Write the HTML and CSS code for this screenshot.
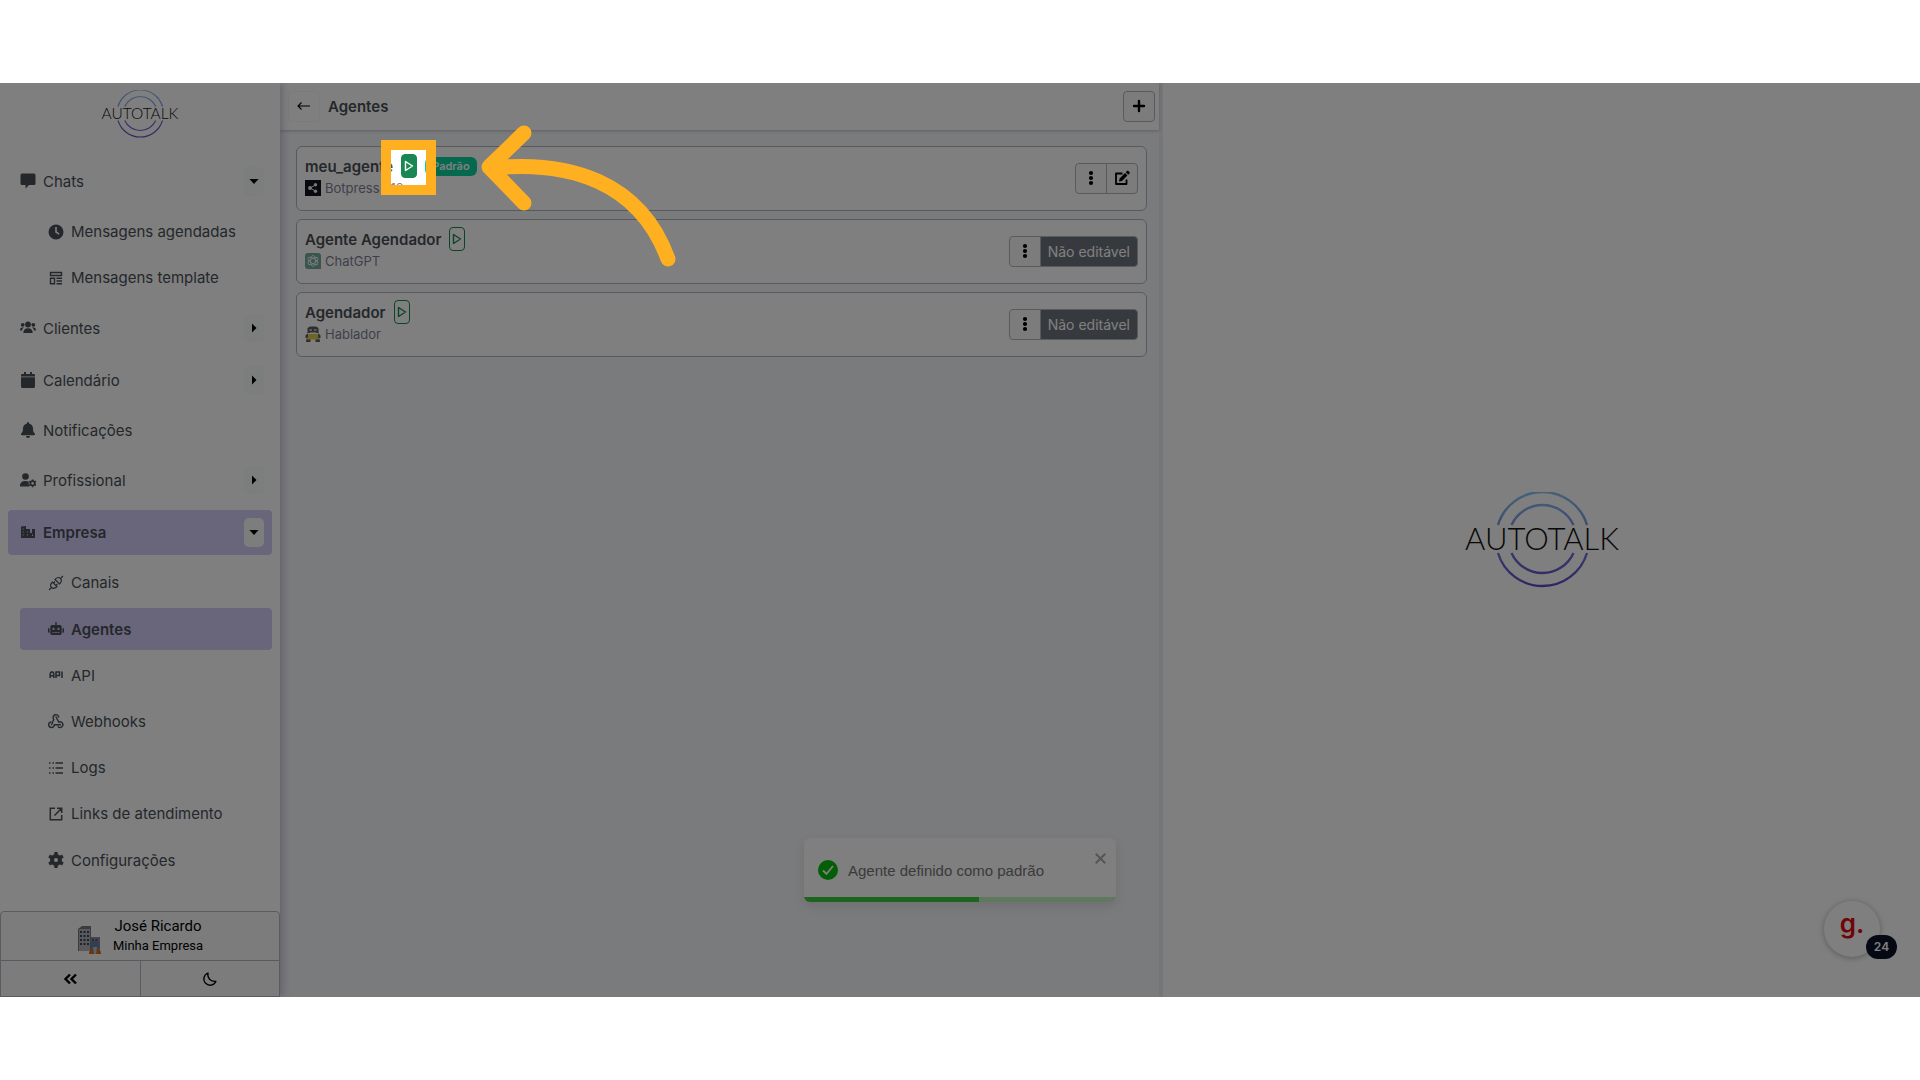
FILE: index.html
```
<!DOCTYPE html>
<html lang="pt-BR">
<head>
    <meta charset="UTF-8">
    <meta name="viewport" content="width=device-width, initial-scale=1.0">
    <title>Autotalk - Agentes</title>
    <link rel="stylesheet" href="styles.css">
</head>
<body>
    <!-- Shared icons -->
    <svg class="sprite" width="0" height="0" aria-hidden="true">
        <defs>
            <linearGradient id="ring" gradientUnits="userSpaceOnUse" x1="0" y1="0" x2="0" y2="96">
                <stop offset="0" stop-color="#8ac4f2"/>
                <stop offset="0.5" stop-color="#7583d6"/>
                <stop offset="1" stop-color="#5d48c8"/>
            </linearGradient>
        </defs>
        <symbol id="rings" viewBox="0 0 160 96">
            <g fill="none" stroke="url(#ring)" stroke-width="2.4">
                <path d="M36 33A46.500 46.500 0 0 1 125 33M49.500 33A34 34 0 0 1 111.500 33"/>
                <path d="M36 61A46.500 46.500 0 0 0 125 61M49.500 61A34 34 0 0 0 111.500 61"/>
            </g>
        </symbol>
        <symbol id="caret-down" viewBox="0 0 10 10"><path d="M.5 3h9L5 8z"/></symbol>
        <symbol id="caret-right" viewBox="0 0 10 10"><path d="M3 .5v9L7.500 5z"/></symbol>
        <symbol id="play" viewBox="0 0 10 12"><path d="M1.500 1.500v9L8.500 6z" fill="none" stroke="currentColor" stroke-width="1.400" stroke-linejoin="round"/></symbol>
        <symbol id="dots" viewBox="0 0 16 16"><circle cx="8" cy="3" r="2.100"/><circle cx="8" cy="8" r="2.100"/><circle cx="8" cy="13" r="2.100"/></symbol>
    </svg>

    <div class="stage">
        <aside class="sidebar">
            <svg class="logo logo-small" viewBox="0 0 160 96" role="img" aria-label="Autotalk">
                <use href="#rings"/>
                <text class="logo-text" x="80" y="58" text-anchor="middle">AUTOTALK</text>
            </svg>

            <nav class="menu">
                <div class="item">
                    <svg class="icon" viewBox="0 0 16 16"><path d="M2 .5h12A1.500 1.500 0 0 1 15.500 2v8.500A1.500 1.500 0 0 1 14 12H9l-3.500 3.500V12H2A1.500 1.500 0 0 1 .5 10.500V2A1.500 1.500 0 0 1 2 .5z"/></svg>
                    <a href="#">Chats</a>
                    <button class="toggle" aria-label="Recolher Chats"><svg><use href="#caret-down"/></svg></button>
                </div>
                <div class="submenu">
                    <a class="subitem" href="#">
                        <svg class="icon" viewBox="0 0 16 16"><path fill-rule="evenodd" d="M8 .5a7.500 7.500 0 1 1 0 15 7.500 7.500 0 0 1 0-15zM7.200 3v5.500l3.500 2.300.9-1.300-2.800-1.900V3z"/></svg>
                        Mensagens agendadas
                    </a>
                    <a class="subitem" href="#">
                        <svg class="icon" viewBox="0 0 16 16"><path fill="none" stroke="currentColor" stroke-width="1.400" d="M2.500 2.500h11v3h-11zM2.500 8.200h4v5.500h-4zM8.500 8.200H14M8.500 11H14M8.500 13.700H14"/></svg>
                        Mensagens template
                    </a>
                </div>
                <div class="item">
                    <svg class="icon" viewBox="0 0 16 16"><circle cx="8" cy="4.500" r="2.900"/><path d="M3.300 13c0-3.200 1.700-4.800 4.700-4.800s4.700 1.600 4.700 4.800z"/><circle cx="2.700" cy="4.800" r="1.900"/><circle cx="13.300" cy="4.800" r="1.900"/><path d="M0 10.500c0-2.300 1-3.300 3.900-3.300-1.100.8-1.700 2-1.800 3.300zM16 10.500c0-2.300-1-3.300-3.900-3.300 1.100.8 1.700 2 1.800 3.300z"/></svg>
                    <a href="#">Clientes</a>
                    <button class="toggle" aria-label="Expandir Clientes"><svg><use href="#caret-right"/></svg></button>
                </div>
                <div class="item">
                    <svg class="icon" viewBox="0 0 16 16"><path d="M4 0h2v2h4V0h2v2h2a1 1 0 0 1 1 1v1.500H1V3a1 1 0 0 1 1-1h2zM1 5.200h14v9.300A1.500 1.500 0 0 1 13.500 16h-11A1.500 1.500 0 0 1 1 14.500z"/></svg>
                    <a href="#">Calendário</a>
                    <button class="toggle" aria-label="Expandir Calendário"><svg><use href="#caret-right"/></svg></button>
                </div>
                <div class="item item-plain">
                    <svg class="icon" viewBox="0 0 16 16"><path d="M8 0a1 1 0 0 1 1 1v.6c2.500.5 4 2.400 4 5 0 3 .8 4 1.800 5 .6.700.2 1.700-.8 1.700H2c-1 0-1.400-1-.8-1.700 1-1 1.800-2 1.800-5 0-2.600 1.500-4.500 4-5V1a1 1 0 0 1 1-1zM6 14h4a2 2 0 0 1-4 0z"/></svg>
                    <a href="#">Notificações</a>
                </div>
                <div class="item">
                    <svg class="icon" viewBox="0 0 16 16"><circle cx="5.500" cy="4.500" r="3.300"/><path d="M0 14.500c0-4 2-5.500 5.500-5.500 1.500 0 2.700.3 3.500.9-.6 1.500-.4 3.200.7 4.600z"/><circle cx="12.600" cy="11.300" r="2.200" fill="none" stroke="currentColor" stroke-width="1.700"/><path stroke="currentColor" stroke-width="1.600" d="M12.600 7.400v1.500M12.600 13.700v1.500M9.200 9.300l1.400.8M14.600 12.500l1.400.8M9.200 13.300l1.400-.8M14.600 10.100l1.400-.8"/></svg>
                    <a href="#">Profissional</a>
                    <button class="toggle" aria-label="Expandir Profissional"><svg><use href="#caret-right"/></svg></button>
                </div>
                <div class="item active">
                    <svg class="icon" viewBox="0 0 16 16"><path fill-rule="evenodd" d="M1 2.500L6 2v3h4v4h2V5h3v9H1zM2.700 4.500v1h1v-1zm0 3v1h1v-1zm0 3v1h1v-1zM7 7.500v1h1v-1zm0 3v1h1v-1zm5 0v1.500h1v-1.500z"/></svg>
                    <a href="#">Empresa</a>
                    <button class="toggle" aria-label="Recolher Empresa"><svg><use href="#caret-down"/></svg></button>
                </div>
                <div class="submenu submenu-company">
                    <a class="subitem" href="#">
                        <svg class="icon" viewBox="0 0 16 16"><g fill="none" stroke="currentColor" stroke-width="1.200"><path d="M1 15l2.500-2.500M12.500 3.500L15 1M3.500 12.500c-1.700-1.700-1.200-3.300 1-5.500l4.500 4.500c-2.200 2.200-3.800 2.700-5.500 1zM12.500 3.500c1.700 1.700 1.200 3.300-1 5.500L7 4.500c2.200-2.200 3.800-2.700 5.500-1zM5.500 8L7 6.500M8 10.500L9.500 9"/></g></svg>
                        Canais
                    </a>
                    <a class="subitem active" href="#">
                        <svg class="icon" viewBox="0 0 16 16"><path fill-rule="evenodd" d="M7.300 1h1.400v3H12a1.700 1.700 0 0 1 1.700 1.700v6.600A1.700 1.700 0 0 1 12 14H4a1.700 1.700 0 0 1-1.700-1.700V5.700A1.700 1.700 0 0 1 4 4h3.300zM5.500 6.800a1.100 1.100 0 1 0 0 2.200 1.100 1.100 0 0 0 0-2.200zm5 0a1.100 1.100 0 1 0 0 2.200 1.100 1.100 0 0 0 0-2.200zM4.700 11v1h1.500v-1zm2.500 0v1h1.600v-1zm2.600 0v1h1.500v-1zM0 7.200h1.500v4.600H.8a.8.8 0 0 1-.8-.8zM16 7.200h-1.500v4.600h.7a.8.8 0 0 0 .8-.8z"/></svg>
                        Agentes
                    </a>
                    <a class="subitem" href="#">
                        <svg class="icon" viewBox="0 0 16 16"><path fill="none" stroke="currentColor" stroke-width="1.500" d="M2.200 11V6.500L3.200 5h1.600l1 1.500V11M2.200 8.700h3.600M8 11V5h3.500v3.500H8M14 4.500V11"/></svg>
                        API
                    </a>
                    <a class="subitem" href="#">
                        <svg class="icon" viewBox="0 0 16 16"><g fill="none" stroke="currentColor" stroke-width="1.400" stroke-linecap="round"><path d="M5.500 5.800A2.800 2.800 0 1 1 10.700 4M5.800 6.300L3.700 11.500M8 3.800l2.800 5.400M10.800 9.200a2.800 2.800 0 1 1-.6 4.600M12.500 11.800H6.300M6.300 11.800A2.800 2.800 0 1 1 2.800 9"/></g></svg>
                        Webhooks
                    </a>
                    <a class="subitem" href="#">
                        <svg class="icon" viewBox="0 0 16 16"><path fill="none" stroke="currentColor" stroke-width="1.300" d="M1 3h1.500M4.500 3H6M7.500 3H15M1 8h1.500M4.500 8H6M7.500 8H15M1 13h1.500M4.500 13H6M7.500 13H15"/></svg>
                        Logs
                    </a>
                    <a class="subitem" href="#">
                        <svg class="icon" viewBox="0 0 16 16"><path fill="none" stroke="currentColor" stroke-width="1.500" d="M7 2.300H2.300v11.400h11.400V9M9 2.300h4.700V7M13.700 2.300L6.500 9.500"/></svg>
                        Links de atendimento
                    </a>
                    <a class="subitem" href="#">
                        <svg class="icon" viewBox="0 0 16 16"><path fill="none" stroke="currentColor" stroke-width="4" d="M8 4a4 4 0 1 1 0 8 4 4 0 0 1 0-8z"/><path stroke="currentColor" stroke-width="3.400" d="M8 0v3M8 13v3M1.100 4l2.600 1.500M12.300 10.500l2.600 1.500M1.100 12l2.600-1.500M12.300 5.500L14.900 4"/></svg>
                        Configurações
                    </a>
                </div>
            </nav>

            <footer class="account">
                <div class="user">
                    <svg class="avatar" viewBox="0 0 24 30">
                        <path fill="#77787c" d="M1 4l4-3h9v25H1z"/>
                        <path fill="#b3b1b5" d="M2 4h11v22H2z"/>
                        <path stroke="#3f4560" stroke-width="2" stroke-dasharray="2 1.500" d="M3 7h9M3 11h9M3 15h9M3 19h9"/>
                        <path fill="#8a8890" d="M14 12h9v14h-9z"/>
                        <path stroke="#4b5370" stroke-width="2" stroke-dasharray="2 1.500" d="M15 15h7M15 19h7"/>
                        <path fill="#d96a25" d="M12 29c0-4 2-5 6-5s6 1 6 5z"/>
                        <circle cx="18" cy="20" r="4.500" fill="#647f9c"/>
                        <path fill="#b7c5d2" d="M16 22h4l-1 7h-2z"/>
                    </svg>
                    <div class="user-names">
                        <span class="user-name">José Ricardo</span>
                        <span class="user-company">Minha Empresa</span>
                    </div>
                </div>
                <div class="account-actions">
                    <button aria-label="Recolher menu"><svg class="icon" viewBox="0 0 16 16"><path fill="none" stroke="currentColor" stroke-width="2.400" d="M7 3.500L2.500 8 7 12.500M13 3.500L8.500 8l4.500 4.500"/></svg></button>
                    <button aria-label="Modo escuro"><svg class="icon" viewBox="0 0 16 16"><path fill="none" stroke="currentColor" stroke-width="1.300" stroke-linejoin="round" d="M6 2C5 7 8.500 10.800 14 10.300A6.300 6.300 0 1 1 6 2z"/></svg></button>
                </div>
            </footer>
        </aside>

        <main class="agents">
            <header class="agents-header">
                <button class="btn btn-back" aria-label="Voltar"><svg class="icon" viewBox="0 0 16 16"><path fill="none" stroke="currentColor" stroke-width="1.100" d="M14 8H2M5.500 4.500L2 8l3.500 3.500"/></svg></button>
                <h1>Agentes</h1>
                <button class="btn" aria-label="Adicionar agente"><svg class="icon" viewBox="0 0 16 16"><path stroke="currentColor" stroke-width="2.400" stroke-linecap="round" d="M8 3v10M3 8h10"/></svg></button>
            </header>

            <div class="cards">
                <article class="card">
                    <div class="card-info">
                        <div class="card-title">
                            <h2>meu_agente</h2>
                            <button class="play selected" aria-label="Agente padrão"><svg><use href="#play"/></svg></button>
                            <span class="badge">Padrão</span>
                        </div>
                        <div class="card-type">
                            <svg viewBox="0 0 16 16"><path fill="#10141c" d="M0 0h16v16H0z"/><path stroke="#e6e6e6" fill="none" d="M10.500 5L5 8l5.500 3"/><g fill="#f2f2f2"><circle cx="5" cy="8" r="1.900"/><circle cx="10.500" cy="4.800" r="1.700"/><circle cx="10.500" cy="11.200" r="1.700"/></g></svg>
                            Botpress v12
                        </div>
                    </div>
                    <div class="btn-group">
                        <button class="btn" aria-label="Mais opções"><svg class="icon"><use href="#dots"/></svg></button>
                        <button class="btn" aria-label="Editar"><svg class="icon" viewBox="0 0 16 16"><path fill="none" stroke="currentColor" stroke-width="1.800" stroke-linejoin="round" d="M8.500 3.500H2V14h10.500V9.500"/><path d="M5 11.500l.6-3L11 3l2.400 2.400L8 11zM11.700 2.300L13 1c.4-.4 1-.4 1.400 0l1.100 1.100c.4.400.4 1 0 1.400l-1.300 1.300z"/></svg></button>
                    </div>
                </article>

                <article class="card">
                    <div class="card-info">
                        <div class="card-title">
                            <h2>Agente Agendador</h2>
                            <button class="play" aria-label="Definir como padrão"><svg><use href="#play"/></svg></button>
                        </div>
                        <div class="card-type">
                            <svg viewBox="0 0 16 16"><path fill="#74aa9c" d="M3 0h10a3 3 0 0 1 3 3v13H3a3 3 0 0 1-3-3V3a3 3 0 0 1 3-3z"/><g fill="none" stroke="#e9f3f0" stroke-width=".9"><ellipse cx="8" cy="8" rx="2.500" ry="5.500"/><ellipse cx="8" cy="8" rx="2.500" ry="5.500" transform="rotate(60 8 8)"/><ellipse cx="8" cy="8" rx="2.500" ry="5.500" transform="rotate(120 8 8)"/></g></svg>
                            ChatGPT
                        </div>
                    </div>
                    <div class="btn-group">
                        <button class="btn" aria-label="Mais opções"><svg class="icon"><use href="#dots"/></svg></button>
                        <button class="btn btn-locked">Não editável</button>
                    </div>
                </article>

                <article class="card">
                    <div class="card-info">
                        <div class="card-title">
                            <h2>Agendador</h2>
                            <button class="play" aria-label="Definir como padrão"><svg><use href="#play"/></svg></button>
                        </div>
                        <div class="card-type">
                            <svg viewBox="0 0 16 16"><path fill="#5d5d62" d="M2.500 2L5 .5h6L13.500 2v5h-11zM.5 9.500L3 7v5H.5zM15.500 9.500L13 7v5h2.500zM1.500 12.500h4V16H1zM10.500 12.500h4l.5 3.500h-4.500z"/><path fill="#d9cc4a" d="M3.500 8h9l1.500 5.500H2z"/><path fill="#b5b5ba" d="M4.500 3h2.500v2H4.500zM9 3h2.500v2H9zM5 6h6v1H5z"/></svg>
                            Hablador
                        </div>
                    </div>
                    <div class="btn-group">
                        <button class="btn" aria-label="Mais opções"><svg class="icon"><use href="#dots"/></svg></button>
                        <button class="btn btn-locked">Não editável</button>
                    </div>
                </article>
            </div>
        </main>

        <section class="welcome">
            <svg class="logo logo-large" viewBox="0 0 160 96" role="img" aria-label="Autotalk">
                <use href="#rings"/>
                <text class="logo-text" x="80" y="58" text-anchor="middle">AUTOTALK</text>
            </svg>
        </section>

        <div class="toast" role="status">
            <svg class="toast-icon" viewBox="0 0 20 20"><circle cx="10" cy="10" r="10" fill="#07bc0c"/><path fill="none" stroke="#fff" stroke-width="1.800" d="M5 10.500l3.500 3.500L15 6"/></svg>
            <span>Agente definido como padrão</span>
            <button class="toast-close" aria-label="Fechar"><svg viewBox="0 0 10 10"><path stroke="currentColor" stroke-width="1.800" d="M.7.700l8.600 8.600M9.300.7L.7 9.300"/></svg></button>
            <div class="toast-progress"><div class="toast-bar"></div></div>
        </div>

        <button class="guide" aria-label="Guia">
            <span class="guide-mark">g.</span>
            <span class="guide-count">24</span>
        </button>

        <!-- Tutorial step: dims the page around the highlighted button -->
        <div class="spotlight"></div>
        <svg class="arrow" viewBox="0 0 210 155" aria-hidden="true">
            <path d="M50 15L15 49l35 36M18 50C96 42 166 64 194 141"/>
        </svg>
    </div>
</body>
</html>
```
FILE: styles.css
```
* {
    box-sizing: border-box;
}
body {
    margin: 0;
    min-height: 100vh;
    display: flex;
    align-items: center;
    background-color: #fff;
    color: #495057;
    font-family: Inter, "Noto Sans", sans-serif;
    font-size: 15px;
}
a {
    color: inherit;
    text-decoration: none;
}
button {
    padding: 0;
    border: none;
    color: #000;
    font: inherit;
    cursor: pointer;
}
.sprite {
    position: absolute;
}
.icon {
    width: 16px;
    height: 16px;
    flex: none;
    fill: currentColor;
}
.logo {
    overflow: visible;
}
.logo-text {
    font-family: Lato, sans-serif;
    font-size: 31px;
    font-weight: 300;
    fill: #111;
}
.stage {
    position: relative;
    display: grid;
    grid-template-columns: 280px minmax(0, 883fr) minmax(0, 757fr);
    width: 100%;
    aspect-ratio: 21 / 10;
    overflow: hidden;
}

/* Sidebar */
.sidebar {
    position: relative;
    display: flex;
    flex-direction: column;
    background-color: #fff;
    box-shadow: 2px 0 8px rgba(67, 60, 120, 0.3);
}
.logo-small {
    width: 80px;
    height: 48px;
    margin: 7px auto 0;
}
.menu {
    flex: 1;
    display: flex;
    flex-direction: column;
    gap: 7px;
    padding: 21px 8px 30px;
}
.item {
    display: flex;
    align-items: center;
    gap: 7px;
    height: 45px;
    padding: 0 8px 0 12px;
    border-radius: 4px;
}
.item a {
    flex: 1;
}
.item-plain {
    height: 41px;
}
.submenu {
    display: flex;
    flex-direction: column;
    gap: 4px;
    padding-left: 12px;
}
.submenu-company {
    flex: 1;
    gap: 0;
    justify-content: space-between;
}
.subitem {
    display: flex;
    align-items: center;
    gap: 7px;
    height: 42px;
    padding-left: 28px;
    border-radius: 4px;
}
.active {
    background-color: #d2cdf9;
    font-weight: 600;
}
.toggle {
    display: grid;
    place-items: center;
    width: 20px;
    height: 29px;
    border-radius: 5px;
    background-color: #f9fafa;
}
.toggle svg {
    width: 10px;
    height: 10px;
}
.account {
    border: 1px solid #b4b7c4;
    border-radius: 4px 4px 0 0;
    background-color: #f8f9fa;
    color: #000;
}
.user {
    display: flex;
    align-items: center;
    justify-content: center;
    gap: 12px;
    height: 48px;
}
.avatar {
    width: 24px;
    height: 30px;
    margin-top: 8px;
}
.user-names {
    display: flex;
    flex-direction: column;
    align-items: center;
    font-family: Roboto, sans-serif;
    line-height: 19px;
}
.user-name {
    font-size: 15px;
}
.user-company {
    font-size: 13px;
}
.account-actions {
    display: grid;
    grid-template-columns: 1fr 1fr;
    height: 36px;
    border-top: 1px solid #b4b7c4;
}
.account-actions button {
    display: grid;
    place-items: center;
    background: none;
}
.account-actions button + button {
    border-left: 1px solid #b4b7c4;
}

/* Agent list */
.agents {
    background-color: #f5f6fa;
    border-right: 4px solid #ececf0;
}
.agents-header {
    display: flex;
    align-items: center;
    gap: 8px;
    height: 47px;
    padding: 0 4px 0 8px;
    background-color: #fff;
    box-shadow: 0 1px 3px rgba(67, 60, 90, 0.3);
}
h1 {
    flex: 1;
    margin: 0;
    font-size: 15px;
    font-weight: 600;
}
.btn {
    display: grid;
    place-items: center;
    width: 32px;
    height: 31px;
    border: 1px solid #b0b5bc;
    border-radius: 4px;
    background-color: #f8f9fa;
}
.btn-back {
    border-color: #f6f6f8;
    background-color: #fff;
}
.cards {
    display: flex;
    flex-direction: column;
    gap: 8px;
    padding: 16px 12px 16px 16px;
}
.card {
    display: flex;
    align-items: center;
    justify-content: space-between;
    height: 65px;
    padding: 0 8px;
    border: 1px solid #b0b5bc;
    border-radius: 6px;
    background-color: #fff;
}
.card-info {
    display: flex;
    flex-direction: column;
    padding-bottom: 4px;
}
.card-title {
    display: flex;
    align-items: center;
    gap: 8px;
    height: 24px;
}
h2 {
    margin: 0;
    font-size: 15px;
    font-weight: 600;
}
.play {
    display: grid;
    place-items: center;
    width: 16px;
    height: 24px;
    border: 1px solid #198754;
    border-radius: 4px;
    background-color: #fff;
    color: #198754;
}
.play svg {
    width: 10px;
    height: 12px;
}
.play.selected {
    background-color: #198754;
    color: #fff;
}
.badge {
    padding: 0 7px;
    border-radius: 6px;
    background-color: #08d29c;
    color: #fff;
    font-size: 11px;
    font-weight: 600;
    line-height: 19px;
}
.card-type {
    display: flex;
    align-items: center;
    gap: 4px;
    color: #7f7f98;
    font-size: 13px;
    line-height: 20px;
}
.card-type svg {
    width: 16px;
    height: 16px;
}
.btn-group {
    display: flex;
}
.btn-group .btn:first-child {
    border-radius: 4px 0 0 4px;
}
.btn-group .btn:last-child {
    margin-left: -1px;
    border-radius: 0 4px 4px 0;
}
.btn-group .btn-locked {
    width: auto;
    padding: 0 7px;
    background-color: #6c757d;
    color: #fff;
    font-size: 14px;
}

/* Empty conversation pane */
.welcome {
    display: grid;
    place-items: center;
    background-color: #fff;
}
.logo-large {
    width: 160px;
    height: 96px;
}

/* Floating elements */
.toast {
    position: absolute;
    left: 804px;
    bottom: 95px;
    display: flex;
    align-items: center;
    gap: 10px;
    width: 312px;
    height: 64px;
    padding: 0 14px;
    border-radius: 6px;
    overflow: hidden;
    background-color: #fff;
    box-shadow: 0 4px 12px rgba(0, 0, 0, 0.1);
    color: #757575;
    font-family: "Liberation Sans", Arial, sans-serif;
}
.toast-icon {
    width: 20px;
    height: 20px;
}
.toast-close {
    margin: 0 -4px 24px auto;
    background: none;
    color: #aaa;
}
.toast-close svg {
    width: 11px;
    height: 11px;
}
.toast-progress {
    position: absolute;
    left: 0;
    right: 0;
    bottom: 0;
    height: 5px;
    background-color: #c0eec0;
}
.toast-bar {
    width: 56%;
    height: 100%;
    background-color: #3cc83f;
}
.guide {
    position: absolute;
    right: 40px;
    bottom: 40px;
    width: 56px;
    height: 56px;
    border-radius: 50%;
    background-color: #fff;
    box-shadow: 0 1px 6px rgba(0, 0, 0, 0.3);
}
.guide-mark {
    display: block;
    padding-bottom: 10px;
    color: #e00b12;
    font-size: 26px;
    font-weight: 600;
    line-height: 40px;
}
.guide-count {
    position: absolute;
    right: -17px;
    bottom: -2px;
    width: 31px;
    border-radius: 12px;
    background-color: #0a1226;
    color: #fff;
    font-size: 12px;
    font-weight: 600;
    line-height: 24px;
}
.spotlight {
    position: absolute;
    left: 381px;
    top: 57px;
    width: 55px;
    height: 55px;
    border: 10px solid #ffb020;
    box-shadow: 0 0 0 2000px rgba(0, 0, 0, 0.5);
    pointer-events: none;
}
.arrow {
    position: absolute;
    left: 474px;
    top: 35px;
    width: 210px;
    height: 155px;
    fill: none;
    stroke: #ffb020;
    stroke-width: 15;
    stroke-linecap: round;
    stroke-linejoin: round;
    pointer-events: none;
}
```
